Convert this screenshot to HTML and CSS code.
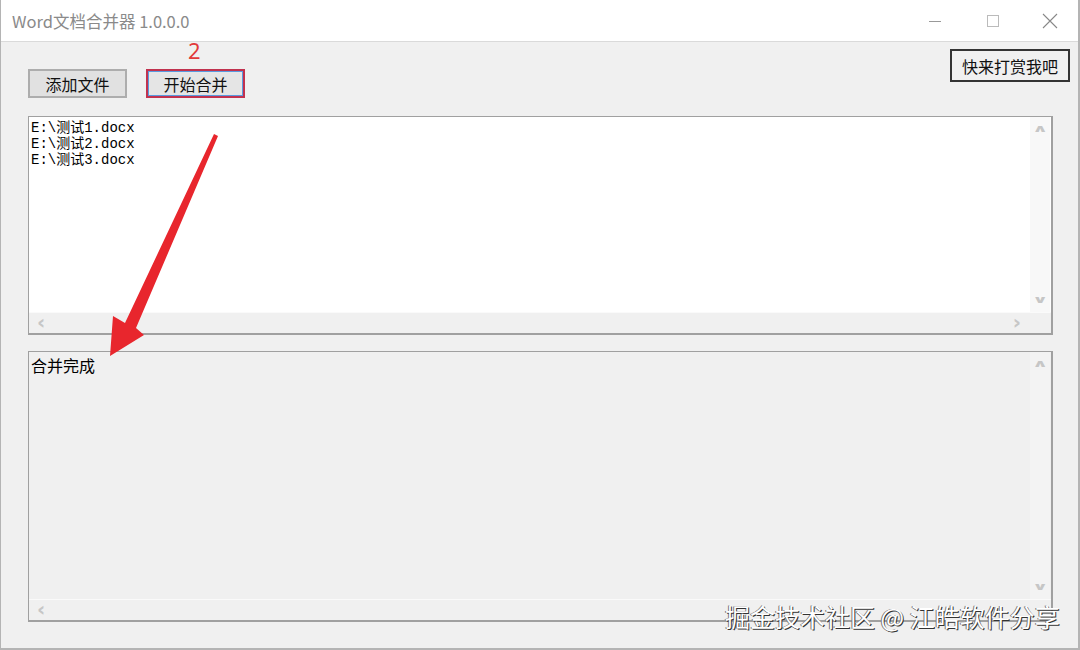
FILE: index.html
```html
<!DOCTYPE html>
<html lang="zh-CN">
<head>
<meta charset="utf-8">
<title>Word文档合并器 1.0.0.0</title>
<link rel="stylesheet" href="styles.css">
</head>
<body>
<div class="window">
  <div class="titlebar">
    <div class="title">Word文档合并器 1.0.0.0</div>
    <div class="controls">
      <span class="ctl"><svg width="14" height="14" viewBox="0 0 14 14"><path d="M1 7.5H13" stroke="#999" stroke-width="1"/></svg></span>
      <span class="ctl"><svg width="14" height="14" viewBox="0 0 14 14"><rect x="1.5" y="1.5" width="11" height="11" fill="none" stroke="#bbb" stroke-width="1"/></svg></span>
      <span class="ctl"><svg width="16" height="16" viewBox="0 0 16 16"><path d="M1 1L15 15M15 1L1 15" stroke="#888" stroke-width="1.1"/></svg></span>
    </div>
  </div>
  <div class="content">
    <div class="toolbar">
      <div class="left-btns">
        <button class="btn">添加文件</button>
        <button class="btn active">开始合并</button>
      </div>
      <button class="btn reward">快来打赏我吧</button>
    </div>
    <div class="box list">
      <div class="box-body">
        <div class="lines">
          <div>E:\测试1.docx</div>
          <div>E:\测试2.docx</div>
          <div>E:\测试3.docx</div>
        </div>
        <div class="vscroll light"><span>&#x2227;</span><span>&#x2228;</span></div>
      </div>
      <div class="hscroll"><span>&#x2039;</span><span>&#x203A;</span></div>
    </div>
    <div class="box log">
      <div class="box-body">
        <div class="logtext">合并完成</div>
        <div class="vscroll"><span>&#x2227;</span><span>&#x2228;</span></div>
      </div>
      <div class="hscroll"><span>&#x2039;</span><span></span></div>
    </div>
  </div>
  <div class="step">2</div>
  <svg class="arrow" width="140" height="240" viewBox="0 0 140 240">
    <path d="M106 2 L110 4 L28 196 L36 203 L2 224 L5 184 L17 191 Z" fill="#e8262d"/>
  </svg>
  <div class="watermark">掘金技术社区 @ 江皓软件分享</div>
</div>
</body>
</html>
```
FILE: styles.css
```css
* { box-sizing: border-box; }
html, body { margin: 0; padding: 0; }
body {
  width: 1080px;
  height: 650px;
  background: #f0f0f0;
  font-family: "Noto Sans CJK SC", "Noto Sans", sans-serif;
  overflow: hidden;
}
.window {
  position: relative;
  width: 1080px;
  height: 650px;
  border-left: 1px solid #b4b4b4;
  border-right: 2px solid #b4b4b4;
  border-bottom: 2px solid #b4b4b4;
  background: #f0f0f0;
}
.titlebar {
  height: 42px;
  background: #fff;
  border-bottom: 1px solid #dadada;
  display: flex;
  align-items: center;
  justify-content: space-between;
}
.title {
  padding-left: 11px;
  font-size: 16.5px;
  color: #8a8a8a;
  font-family: "Noto Sans CJK SC", sans-serif;
}
.controls {
  display: flex;
  align-items: center;
  height: 100%;
}
.ctl {
  width: 58px;
  display: flex;
  justify-content: center;
  align-items: center;
}
.ctl:last-child { width: 56px; }
.content {
  padding: 7px 26px 0 27px;
}
.toolbar {
  display: flex;
  justify-content: space-between;
  align-items: flex-start;
  height: 67px;
}
.left-btns {
  display: flex;
  gap: 19px;
  margin-top: 20px;
}
.btn {
  font-family: "Noto Sans CJK SC", sans-serif;
  font-size: 16px;
  color: #111;
  background: #e1e1e1;
  border: 2px solid #adadad;
  height: 29px;
  width: 99px;
  padding: 0;
  line-height: 24px;
  margin: 0;
}
.btn.active {
  border: 2px solid #c1324f;
  box-shadow: inset 0 0 0 1px #5a9ae0;
  background: #e5e5e5;
}
.reward {
  width: 120px;
  height: 33px;
  border: 2px solid #333;
  background: #f0f0f0;
  margin-right: -18px;
  font-size: 16px;
}
.box {
  width: 1025px;
  border: 1px solid #a0a0a0;
  border-right: 2px solid #a0a0a0;
  border-bottom: 2px solid #a0a0a0;
  display: flex;
  flex-direction: column;
}
.list {
  height: 219px;
  background: #fff;
}
.log {
  height: 271px;
  margin-top: 16px;
  background: #f0f0f0;
}
.box-body {
  flex: 1;
  display: flex;
}
.lines {
  flex: 1;
  padding: 3px 0 0 2px;
  font-family: "Liberation Mono", "Noto Sans CJK SC", monospace;
  font-size: 14px;
  line-height: 16px;
  color: #000;
}
.logtext {
  flex: 1;
  padding: 3px 0 0 2px;
  font-size: 16px;
  line-height: 20px;
  color: #000;
}
.vscroll {
  width: 20px;
  margin-right: 1px;
  display: flex;
  flex-direction: column;
  justify-content: space-between;
  align-items: center;
  padding: 4px 0 4px;
  color: #c6c6c6;
  font-size: 13px;
  font-weight: bold;
  line-height: 16px;
  font-family: "DejaVu Sans", sans-serif;
}
.vscroll span {
  display: inline-block;
  transform: scale(1.5, 0.8);
}
.vscroll.light { background: #f8f8f8; }
.log .vscroll { background: #f3f3f3; }
.hscroll {
  height: 21px;
  background: #f0f0f0;
  display: flex;
  justify-content: space-between;
  align-items: center;
  padding: 0 30px 3px 8px;
  border-top: 1px solid #fafafa;
  color: #c6c6c6;
  font-size: 20px;
  font-weight: bold;
  line-height: 18px;
  font-family: "DejaVu Sans", sans-serif;
}
.step {
  position: absolute;
  left: 187px;
  top: 37px;
  color: #e23a3a;
  font-size: 22px;
  font-family: "Noto Sans", sans-serif;
  line-height: 26px;
}
.arrow {
  position: absolute;
  left: 107px;
  top: 132px;
}
.watermark {
  position: absolute;
  left: 724px;
  top: 600px;
  font-size: 25px;
  line-height: 32px;
  color: #fff;
  text-shadow: 1px 1px 0 #333, -1px 0 0 #777;
  font-family: "Noto Sans CJK SC", sans-serif;
}
```
